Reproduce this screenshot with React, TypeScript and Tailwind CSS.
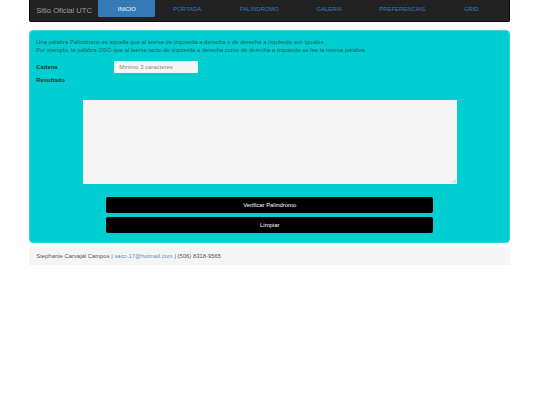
import React from 'react';

const NAV_ITEMS = [
  { label: 'PORTADA', width: 'w-[64px]' },
  { label: 'PALINDROMO', width: 'w-[80px]' },
  { label: 'GALERIA', width: 'w-[60px]' },
  { label: 'PREFERENCIAS', width: 'w-[86px]' },
  { label: 'GRID', width: 'w-[52px]' },
];

export default function App() {
  return (
    <div className="min-h-[405px] bg-white pl-[29.25px] pr-[29.75px] font-['Liberation_Sans',sans-serif] text-[5.9px] leading-[8px] text-[#333]">
      {/* Navbar */}
      <nav className="flex h-[22px] items-start rounded-b-[2px] border border-t-0 border-[#080808] bg-[#222]">
        <span className="w-[68px] whitespace-nowrap pl-[6px] pt-[6px] text-[7.6px] leading-[10px] text-[#9d9d9d]">Sitio Oficial UTC</span>
        <a className="flex h-[17px] w-[57px] items-center justify-center rounded-b-[1px] bg-[#337ab7] text-white">INICIO</a>
        {NAV_ITEMS.map(item => (
          <a key={item.label} className={`flex h-[17px] items-center justify-center text-[#337ab7] ${item.width}`}>
            {item.label}
          </a>
        ))}
      </nav>

      {/* Panel */}
      <main className="mt-[8px] h-[212.5px] rounded-[4px] border border-[#2fd9de] bg-[#00ced1] px-[6px] pt-[7px]">
        <div className="text-[#2b5f62]">
          <p>Una palabra Palíndromo es aquella que al leerse de izquierda a derecha o de derecha a izquierda son iguales.</p>
          <p>Por ejemplo, la palabra OSO que al leerse tanto de izquierda a derecha como de derecha a izquierda se lee la misma palabra.</p>
        </div>

        <div className="mt-[7px] flex items-center">
          <label className="w-[78px] font-bold">Cadena</label>
          <input
            placeholder="Mínimo 3 caracteres"
            className="h-[12px] w-[84px] rounded-[1px] bg-[#f5f5f5] px-[5px] text-[5.9px] placeholder:text-[#888]"
          />
        </div>
        <div className="mt-[3px] font-bold">Resultado</div>

        <div className="mt-[16px] flex justify-center">
          <div className="relative h-[84px] w-[374px]">
            <textarea className="block h-full w-full resize-none bg-[#f5f5f5]" />
            <svg className="absolute bottom-[1px] right-[1px]" width="4" height="4" viewBox="0 0 4 4">
              <path d="M0.5 4 L4 0.5 M2.5 4 L4 2.5" stroke="#999" strokeWidth="0.5" />
            </svg>
          </div>
        </div>

        <div className="mt-[13px] flex flex-col items-center gap-[3.5px]">
          <button className="h-[16px] w-[327px] rounded-[2px] bg-black text-[5.9px] text-white">Verificar Palíndromo</button>
          <button className="h-[16.5px] w-[327px] rounded-[2px] bg-black text-[5.9px] text-white">Limpiar</button>
        </div>
      </main>

      {/* Footer */}
      <footer className="mt-[4.5px] flex h-[17.5px] items-center bg-[#f5f5f5] px-[7px] text-[#555]">
        <span>
          Stephanie Carvajal Campos | <a className="text-[#5b8fc0]">sacc-17@hotmail.com</a> | (506) 8318-9565
        </span>
      </footer>
    </div>
  );
}
